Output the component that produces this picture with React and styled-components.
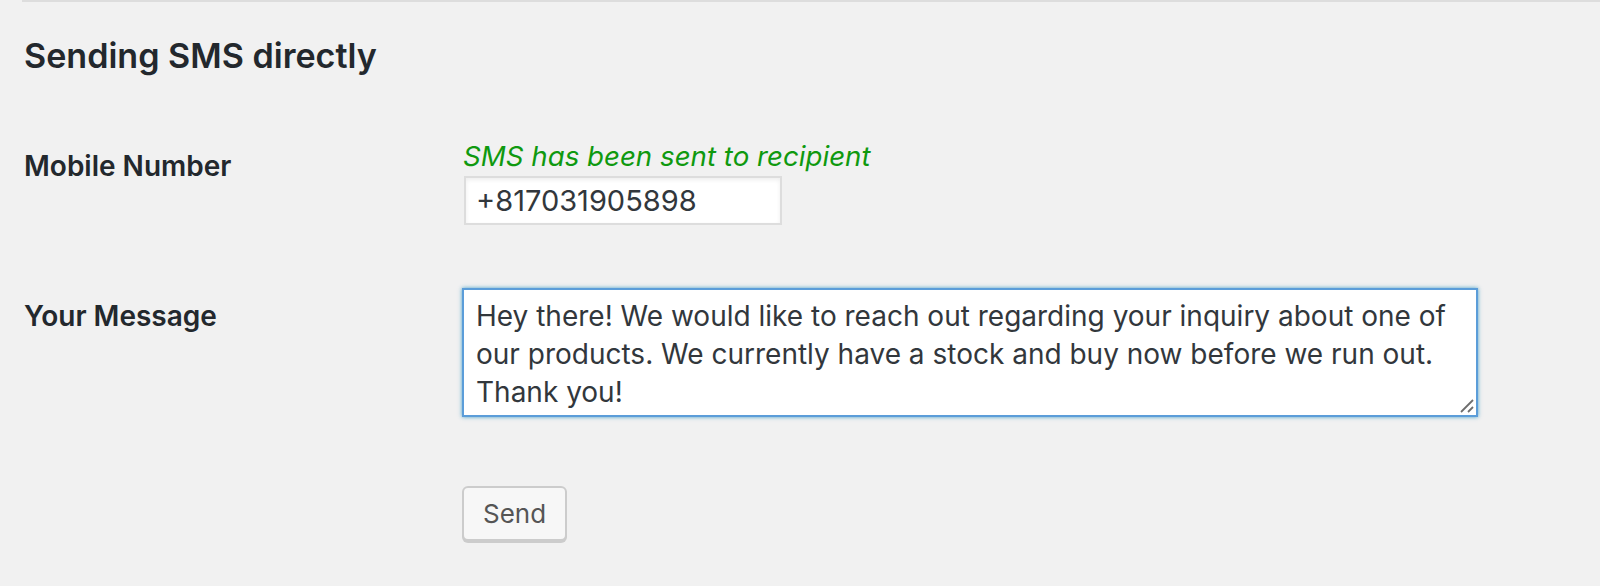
import React, { useEffect, useRef } from "react";
import styled, { createGlobalStyle } from "styled-components";

const Global = createGlobalStyle`
  html, body { margin: 0; padding: 0; background: #f1f1f1; }
  body { font-family: Inter, "Liberation Sans", sans-serif; color: #23282d; }
  * { box-sizing: border-box; }
`;

const Page = styled.div`
  width: 1600px;
  height: 586px;
  overflow: hidden;
  background: #f1f1f1;
`;

const Rule = styled.div`
  margin-left: 22px;
  height: 2px;
  background: #dddddd;
`;

const Content = styled.div`
  padding-left: 24px;
`;

const Heading = styled.h2`
  margin: 32px 0 0;
  font-size: 34.1px;
  line-height: 44px;
  font-weight: 600;
  color: #23282d;
`;

const Row = styled.div`
  display: grid;
  grid-template-columns: 438px 1fr;
  margin-top: ${(p) => p.$top}px;
`;

const Label = styled.label`
  padding-top: ${(p) => p.$pad}px;
  font-size: 28px;
  line-height: 36px;
  font-weight: 600;
  color: #23282d;
`;

const Field = styled.div`
  padding-top: ${(p) => p.$pad}px;
  display: flex;
  flex-direction: column;
  align-items: flex-start;
`;

const Success = styled.p`
  margin: 0 0 0 1px;
  font-size: 27.7px;
  line-height: 39px;
  font-style: italic;
  color: #0f990f;
`;

const TextInput = styled.input`
  width: 318px;
  height: 49px;
  margin: 0 0 0 2px;
  padding: 0 10px;
  border: 2px solid #dddddd;
  background: #ffffff;
  box-shadow: inset 0 2px 4px rgba(0, 0, 0, 0.07);
  font-family: Inter, "Liberation Sans", sans-serif;
  font-size: 29px;
  color: #32373c;
  outline: none;
`;

const MessageWrap = styled.div`
  position: relative;
  width: 1016px;
`;

const MessageBox = styled.textarea`
  width: 1016px;
  height: 129px;
  margin: 0;
  padding: 7px 12px 4px;
  border: 2px solid #5b9dd9;
  box-shadow: 0 0 4px rgba(30, 140, 190, 0.8);
  background: #ffffff;
  font-family: Inter, "Liberation Sans", sans-serif;
  font-size: 28px;
  line-height: 38px;
  color: #32373c;
  caret-color: #23282d;
  outline: none;
  resize: none;
  display: block;
`;

const Grip = styled.svg`
  position: absolute;
  right: 3px;
  bottom: 3px;
  width: 16px;
  height: 16px;
  pointer-events: none;
`;

const Actions = styled.div`
  padding-left: 438px;
  margin-top: 69px;
`;

const Button = styled.button`
  height: 55px;
  padding: 0 19px;
  border: 2px solid #cccccc;
  border-radius: 6px;
  background: #f7f7f7;
  box-shadow: 0 2px 0 #cccccc;
  font-family: Inter, "Liberation Sans", sans-serif;
  font-size: 26px;
  line-height: 51px;
  color: #555555;
  cursor: pointer;
`;

const MESSAGE =
  "Hey there! We would like to reach out regarding your inquiry about one of our products. We currently have a stock and buy now before we run out. Thank you!";

export default function App() {
  const ref = useRef(null);
  useEffect(() => {
    const el = ref.current;
    if (el) {
      el.focus();
      el.setSelectionRange(MESSAGE.length, MESSAGE.length);
    }
  }, []);
  return (
    <Page>
      <Global />
      <Rule />
      <Content>
        <Heading>Sending SMS directly</Heading>
        <Row $top={30}>
          <Label $pad={40} htmlFor="mobile">Mobile Number</Label>
          <Field $pad={29}>
            <Success>SMS has been sent to recipient</Success>
            <TextInput id="mobile" type="text" defaultValue="+817031905898" />
          </Field>
        </Row>
        <Row $top={30}>
          <Label $pad={43} htmlFor="message">Your Message</Label>
          <Field $pad={33}>
            <MessageWrap>
              <MessageBox id="message" ref={ref} defaultValue={MESSAGE} />
              <Grip viewBox="0 0 16 16" aria-hidden="true">
                <line x1="2" y1="14" x2="14" y2="2" stroke="#6d6d6d" strokeWidth="1.8" />
                <line x1="9" y1="14" x2="14" y2="9" stroke="#6d6d6d" strokeWidth="1.8" />
              </Grip>
            </MessageWrap>
          </Field>
        </Row>
        <Actions>
          <Button type="button">Send</Button>
        </Actions>
      </Content>
    </Page>
  );
}
